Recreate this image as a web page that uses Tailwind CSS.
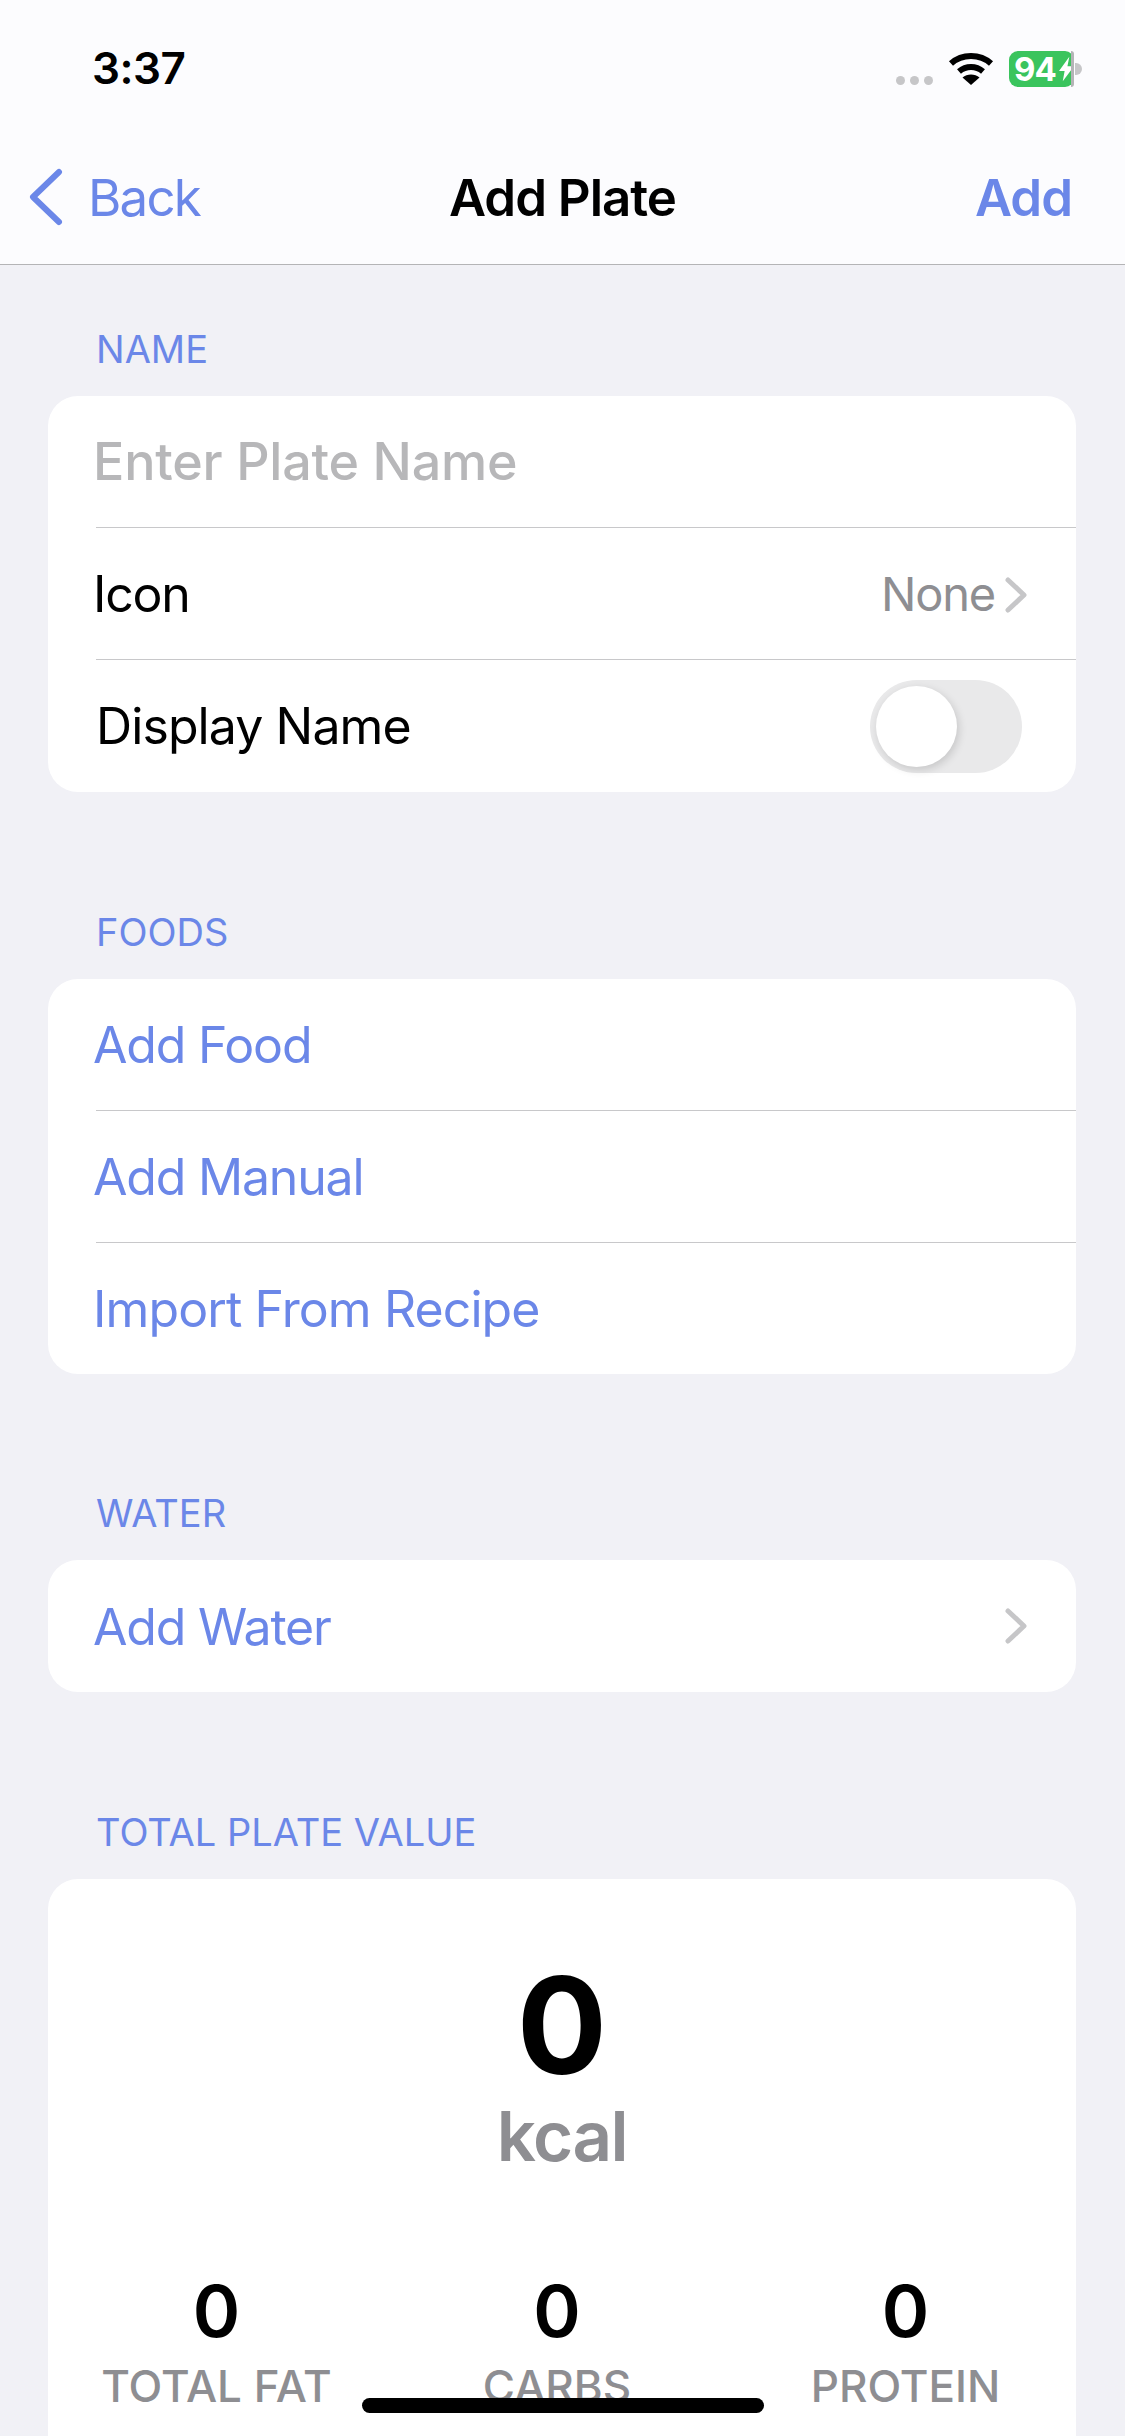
<!DOCTYPE html>
<html lang="en">
<head>
  <meta charset="UTF-8" />
  <title>Add Plate</title>
  <script src="https://cdn.jsdelivr.net/npm/@tailwindcss/browser@4"></script>
</head>
<body class="bg-[#f1f1f6] font-['Inter',sans-serif] text-black">
  <div class="relative h-[2436px] w-[1125px] overflow-hidden">

    <!-- Status bar + nav -->
    <header class="h-[265px] border-b border-[#b4b4b6] bg-[#fcfcfe]">
      <div class="flex h-[147px] items-start justify-between pl-[92px] pr-[51px]">
        <span class="mt-[42px] text-[44px] leading-[52px] font-semibold tracking-[-0.5px]">3:37</span>
        <div class="mt-[51px] flex items-start">
          <div class="mt-[25px] flex gap-[5px]">
            <span class="size-[9px] rounded-full bg-[#c6c6c8]"></span>
            <span class="size-[9px] rounded-full bg-[#c6c6c8]"></span>
            <span class="size-[9px] rounded-full bg-[#c6c6c8]"></span>
          </div>
          <svg class="ml-[15px] mt-[1px]" width="46" height="34" viewBox="0 0 46 34">
            <path d="M3 11.500C14 1.500 32 1.500 43 11.500" fill="none" stroke="#000" stroke-width="6"/>
            <path d="M11 19.500C18 13.500 28 13.500 35 19.500" fill="none" stroke="#000" stroke-width="6"/>
            <path d="M23 33L14.500 25.500C19 21.500 27 21.500 31.500 25.500Z" fill="#000"/>
          </svg>
          <div class="relative ml-[15px] flex h-[36px] w-[65px] items-center rounded-[9px] bg-[#3ac45d] pl-[5px] text-[33px] leading-none font-bold tracking-[-1px] text-white">
            94<svg class="ml-[3px] shrink-0" width="15" height="26" viewBox="0 0 16 26"><path d="M11 0L0 15h6L4 26l12-16H9Z" fill="#fff"/></svg>
            <span class="absolute right-0 top-0 h-[36px] w-[3px] rounded-r-[3px] bg-[#b4b4b6]"></span>
            <span class="absolute -right-[8px] top-[12px] h-[12px] w-[7px] rounded-r-full bg-[#c6c6c8]"></span>
          </div>
        </div>
      </div>
      <div class="relative flex h-[100px] items-center justify-between pl-[28px] pr-[53px]">
        <div class="flex items-center text-[#6b87e8]">
          <svg width="36" height="58" viewBox="0 0 36 58"><path d="M31 4L5 29l26 25" fill="none" stroke="currentColor" stroke-width="6" stroke-linecap="round" stroke-linejoin="round"/></svg>
          <span class="ml-[24px] text-[51px] leading-none tracking-[-1.8px]">Back</span>
        </div>
        <h1 class="absolute inset-x-0 text-center text-[51px] leading-none font-semibold tracking-[-1px]">Add Plate</h1>
        <span class="text-[51px] leading-none font-semibold tracking-[-1px] text-[#6b87e8]">Add</span>
      </div>
    </header>

    <main class="pl-[48px] pr-[49px]">
      <!-- Name -->
      <h2 class="pl-[48px] pt-[62px] pb-[25px] text-[38px] leading-[44px] text-[#6b87e8]">NAME</h2>
      <section class="rounded-[30px] bg-white">
        <div class="flex h-[131px] items-center pl-[45px] text-[52px] font-medium tracking-[-0.2px] text-[#b7b7b9]">Enter Plate Name</div>
        <div class="ml-[48px] flex h-[132px] items-center justify-between border-t border-[#c8c8ca] pr-[47px] pt-[2px] text-[50px] tracking-[-1.2px]">
          <span class="-ml-[3px]">Icon</span>
          <span class="flex items-center gap-[9px] text-[47px] text-[#8e8e92]">None
            <svg width="25" height="38" viewBox="0 0 25 38"><path d="M4 4l16 15L4 34" fill="none" stroke="#c6c6c8" stroke-width="5" stroke-linecap="round" stroke-linejoin="round"/></svg>
          </span>
        </div>
        <div class="ml-[48px] flex h-[133px] items-center justify-between border-t border-[#c8c8ca] pr-[54px] text-[50px] tracking-[-0.9px]">
          <span>Display Name</span>
          <div class="flex h-[93px] w-[152px] items-center rounded-full bg-[#e9e9ea] pl-[6px]">
            <span class="size-[81px] rounded-full bg-white shadow-[2px_3px_8px_rgba(0,0,0,0.15)]"></span>
          </div>
        </div>
      </section>

      <!-- Foods -->
      <h2 class="pl-[48px] pt-[118px] pb-[25px] text-[38px] leading-[44px] text-[#6b87e8]">FOODS</h2>
      <section class="rounded-[30px] bg-white text-[50px] tracking-[-1.2px] text-[#6b87e8]">
        <div class="flex h-[131px] items-center pl-[45px] pt-[2px]">Add Food</div>
        <div class="ml-[48px] flex h-[132px] items-center border-t border-[#c8c8ca] pt-[2px]"><span class="-ml-[3px]">Add Manual</span></div>
        <div class="ml-[48px] flex h-[132px] items-center border-t border-[#c8c8ca] pt-[2px]"><span class="-ml-[3px] tracking-[-0.9px]">Import From Recipe</span></div>
      </section>

      <!-- Water -->
      <h2 class="pl-[48px] pt-[117px] pb-[25px] text-[38px] leading-[44px] text-[#6b87e8]">WATER</h2>
      <section class="flex h-[132px] items-center justify-between rounded-[30px] bg-white pl-[45px] pr-[47px] text-[50px] tracking-[-1.2px] text-[#6b87e8]">
        <span class="pt-[2px]">Add Water</span>
        <svg width="25" height="38" viewBox="0 0 25 38"><path d="M4 4l16 15L4 34" fill="none" stroke="#c6c6c8" stroke-width="5" stroke-linecap="round" stroke-linejoin="round"/></svg>
      </section>

      <!-- Total -->
      <h2 class="pl-[48px] pt-[118px] pb-[25px] text-[38px] leading-[44px] text-[#6b87e8]">TOTAL PLATE VALUE</h2>
      <section class="h-[700px] rounded-[30px] bg-white pt-[72px]">
        <div class="text-center text-[134px] leading-[149px] font-bold">0</div>
        <div class="text-center text-[69px] leading-[72px] font-semibold tracking-[-1.5px] text-[#8e8e92]">kcal</div>
        <div class="mt-[99px] grid grid-cols-[337px_344px_353px] text-center">
          <div>
            <div class="text-[72px] leading-[80px] font-semibold">0</div>
            <div class="mt-[7px] text-[44px] leading-[56px] font-medium text-[#8e8e92]">TOTAL FAT</div>
          </div>
          <div>
            <div class="text-[72px] leading-[80px] font-semibold">0</div>
            <div class="mt-[7px] text-[44px] leading-[56px] font-medium text-[#8e8e92]">CARBS</div>
          </div>
          <div>
            <div class="text-[72px] leading-[80px] font-semibold">0</div>
            <div class="mt-[7px] text-[44px] leading-[56px] font-medium text-[#8e8e92]">PROTEIN</div>
          </div>
        </div>
      </section>
    </main>

    <!-- Home indicator -->
    <div class="absolute left-[362px] top-[2398px] h-[15px] w-[402px] rounded-full bg-black"></div>
  </div>
</body>
</html>
